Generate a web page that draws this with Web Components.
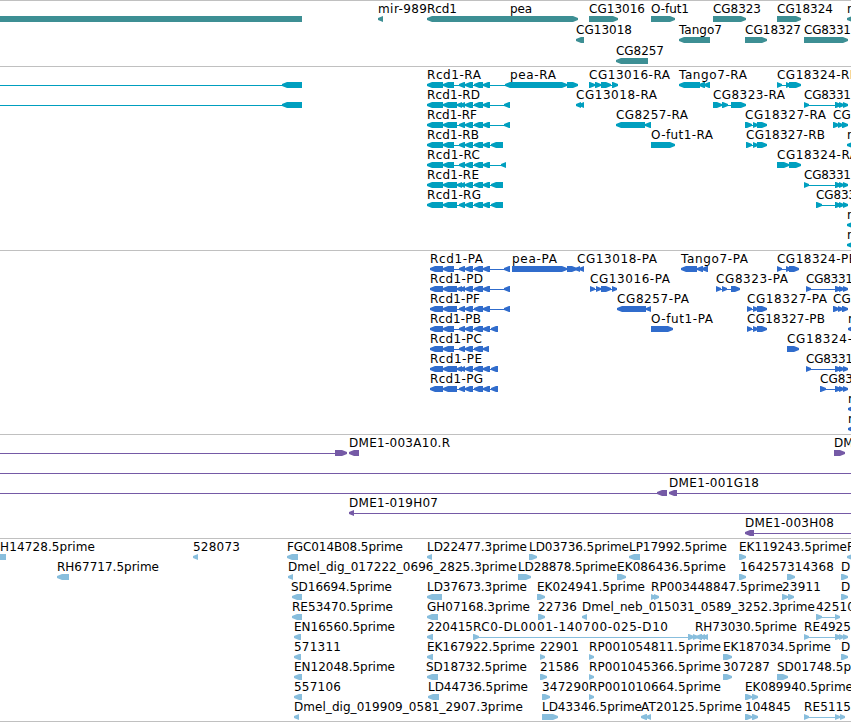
<!DOCTYPE html>
<html lang="en">
<head>
<meta charset="utf-8">
<title>Genome browser</title>
<style>
  html, body { margin: 0; background: #fff; }
  body { width: 851px; height: 722px; overflow: hidden; }
</style>
</head>
<body>
<genome-browser></genome-browser>

<script>
// ============================================================
// <genome-browser>  stack of tracks
// <genome-track>    one bordered track, rows are slotted in
// <track-row>       one lane of labels and features
//
// Row data is "labels | features":
//   label    x:text:width   (width may be left out)
//   feature  a<b  points left     a>b  points right
//            a<>b points both     a=b  plain block    a-b  thin line
// ============================================================

const SVG_NS = "http://www.w3.org/2000/svg";
const HEAD = 5;
const TOP = 13;
const TALL = 6;
const BEARING = 1; // label widths include this much space on the right

const TRACKS = [
  {
    color: "#3d8f94", lane: 21, pad: 0,
    rows: [
      "378:mir-989:50 427:Rcd1:31 510:pea:23 589:CG13016:57 651:O-fut1:39 713:CG8323:49 777:CG18324:57 847:r | 0=302 378<383 427<>578 589>618 651>675 713>746 777>801 847<858",
      "576:CG13018:57 679:Tango7:44 745:CG18327:57 804:CG8331:48 | 576<584 679<710 745>767 804>848",
      "616:CG8257:49 | 616<648",
    ],
  },
  {
    color: "#009fbf", lane: 20, pad: 1,
    rows: [
      "427:Rcd1-RA:55 510:pea-RA:47 589:CG13016-RA:82 679:Tango7-RA:69 777:CG18324-RB:82 | 0-302 282<302 427-506 427<443 443<454 459<465 465<473 474<483 483<490 505<>567 567>578 589-618 589>595 595>601 601>611 612>618 679<700 699<705 704<710 777-801 777>782 786>791 789>801",
      "427:Rcd1-RD:54 576:CG13018-RA:82 713:CG8323-RA:73 804:CG8331:48 | 0-302 282<302 427-510 427<443 443<457 457<462 460<465 465<473 474<483 483<490 504<510 576<581 579<584 713-746 713>722 722>728 731>746 804-848 804>809 835>841 839>844 843>848",
      "427:Rcd1-RF:51 616:CG8257-RA:73 745:CG18327-RA:82 833:CG | 427-510 427<443 443<457 459<465 465<473 474<483 483<490 504<510 616<645 645<651 745-767 745>752 753>758 757>767 833-848 833>839 838>843 842>848",
      "427:Rcd1-RB:53 651:O-fut1-RA:63 746:CG18327-RB:80 847:r | 427-503 427<443 443<454 459<465 465<473 474<483 483<490 491<503 651>675 746-767 746>752 753>758 757>767 847<858",
      "427:Rcd1-RC:54 777:CG18324-RA:82 | 427-506 427<443 443<454 459<465 465<473 474<483 483<490 501<506 777>789 789>801",
      "427:Rcd1-RE:53 804:CG8331:48 | 427-503 427<443 443<457 457<462 460<465 465<473 474<483 483<490 491<503 804-848 804>809 835>841 839>844 843>848",
      "427:Rcd1-RG:55 816:CG833:41 | 427-503 427<443 443<457 459<465 465<473 474<483 483<490 491<503 816-848 816>822 835>841 839>844 843>848",
      "847:r | 847<858",
      "847:r | 847<858",
    ],
  },
  {
    color: "#306ccc", lane: 20, pad: 1,
    rows: [
      "430:Rcd1-PA:54 512:pea-PA:46 577:CG13018-PA:81 681:Tango7-PA:68 777:CG18324-PB:81 | 430-510 430<443 443<454 459<465 465<473 474<483 483<490 504<510 512>567 567>577 575<580 579<584 681<697 697<703 702<708 777-799 777>782 786>791 789>799",
      "430:Rcd1-PD:54 590:CG13016-PA:81 716:CG8323-PA:73 806:CG8331:48 | 430-510 430<443 443<457 457<462 460<465 465<473 474<483 483<490 504<510 590-617 590>595 596>601 601>611 612>617 716-740 716>721 722>727 731>740 806-848 806>811 835>841 839>844 843>848",
      "430:Rcd1-PF:51 617:CG8257-PA:73 747:CG18327-PA:81 833:CG | 430-510 430<443 443<457 459<465 465<473 474<483 483<490 504<510 617<646 646<651 747-767 747>752 753>758 757>767 833-848 833>839 838>843 842>848",
      "430:Rcd1-PB:52 651:O-fut1-PA:63 747:CG18327-PB:79 848:r | 430-498 430<443 443<454 459<465 465<473 474<483 483<490 491<498 651>673 747-767 747>752 753>758 757>767 848<858",
      "430:Rcd1-PC:53 787:CG18324-:66 | 430-489 430<443 443<454 459<465 465<473 474<483 483<489 787>799",
      "430:Rcd1-PE:53 806:CG8331:48 | 430-498 430<443 443<457 457<462 460<465 465<473 474<483 483<490 491<498 806-848 806>811 835>841 839>844 843>848",
      "430:Rcd1-PG:54 820:CG83:34 | 430-498 430<443 443<457 459<465 465<473 474<483 483<490 491<498 820-848 820>826 835>841 839>844 843>848",
      "848:r | 848<858",
      "848:r | 848<858",
    ],
  },
  {
    color: "#755aa6", lane: 20, pad: 1,
    rows: [
      "349:DME1-003A10.R:102 834:DM | 0-336 335>347 349<359 834>845",
      " | 0-851",
      "669:DME1-001G18:91 | 0-660 657<667 669<677 672-851",
      "349:DME1-019H07:90 | 349<354 352-851",
      "745:DME1-003H08:90 | 745<754 750-851",
    ],
  },
  {
    color: "#88bedd", lane: 20, pad: 0, last: true,
    rows: [
      "0:H14728.5prime:96 193:528073:48 287:FGC014B08.5prime:117 427:LD22477.3prime:101 529:LD03736.5prime:101 629:LP17992.5prime:99 739:EK119243.5prime:109 847:F | 0=6 193<198 287<298 427<432 529>537 629<640 739>746 847<858",
      "57:RH67717.5prime:103 288:Dmel_dig_017222_0696_2825.3prime:230 518:LD28878.5prime:100 617:EK086436.5prime:110 740:164257:48 787:314368:48 841:D | 57<69 288<293 518>531 617>626 739>746 787>795 841>848",
      "291:SD16694.5prime:102 427:LD37673.3prime:101 537:EK024941.5prime:109 651:RP003448847.5prime:133 782:23911:40 841:D | 292<302 427<442 537>545 651>656 654>659 782>788 788>794 841>848",
      "292:RE53470.5prime:102 427:GH07168.3prime:104 538:22736:40 582:Dmel_neb_015031_0589_3252.3prime:234 816:42510:40 | 292<302 427<438 538>545 582<587 816-840 816>822 835>840",
      "294:EN16560.5prime:102 427:220415:47 473:RC0-DL0001-140700-025-D10:196 695:RH73030.5prime:103 804:RE4925:48 | 294<301 427<433 473>479 475-700 688>694 693>698 696<702 700<705 703<708 804-848 804>809 835>841 839>844 843>848",
      "294:571311:48 427:EK167922.5prime:109 540:22901:40 589:RP001054811.5prime:133 723:EK187034.5prime:109 841:D | 294<301 427<433 540>545 589>594 723>732 841>848",
      "294:EN12048.5prime:102 426:SD18732.5prime:102 540:21586:40 589:RP001045366.5prime:133 723:307287:48 777:SD01748.5p:75 | 294<302 427<438 540>547 589>594 723>732 777>788",
      "294:557106:48 428:LD44736.5prime:101 542:347290:48 589:RP001010664.5prime:133 745:EK089940.5prime:109 | 294<302 428<439 542>550 589>594 745>752 752>758",
      "294:Dmel_dig_019909_0581_2907.3prime:230 542:LD43346.5prime:101 641:AT20125.5prime:102 745:104845:47 804:RE5115:48 | 294<299 542>558 641<647 646<651 745>752 752>758 804-845 804>809 835>840 840>845",
    ],
  },
];

function svgEl(name, attrs) {
  const el = document.createElementNS(SVG_NS, name);
  for (const key in attrs) el.setAttribute(key, attrs[key]);
  return el;
}

// Outline of one feature block with its arrow heads.
function blockPoints(a, kind, b) {
  const mid = TOP + TALL / 2;
  const end = TOP + TALL;
  const head = Math.min(HEAD, b - a);
  const left = kind[0] === "<" ? head : 0;
  const right = kind.endsWith(">") ? head : 0;
  const pts = [];
  if (left) pts.push([a, mid + 1], [a, mid - 1]);
  pts.push([a + left, TOP], [b - right, TOP]);
  if (right) pts.push([b, mid - 1], [b, mid + 1]);
  pts.push([b - right, end], [a + left, end]);
  return pts.map((p) => p.join(",")).join(" ");
}

class TrackRow extends HTMLElement {
  constructor() {
    super();
    this.attachShadow({ mode: "open" }).innerHTML = `
      <style>
        :host { display: block; height: var(--lane, 20px); }
        svg { display: block; width: 100%; height: 100%; overflow: visible; }
        text { font: 12px "DejaVu Sans", sans-serif; fill: #000; }
        polygon, rect { fill: var(--track-color); }
      </style>
      <svg></svg>
    `;
  }

  set data(value) {
    const svg = this.shadowRoot.querySelector("svg");
    const [labels, features] = value.split("|").map((s) => s.trim());

    for (const f of features.split(" ")) {
      const [, a, kind, b] = f.match(/^(\d+)(<>|[<>=-])(\d+)$/);
      if (kind === "-") {
        svg.appendChild(svgEl("rect", { x: a, y: TOP + 3, width: b - a, height: 1 }));
      } else {
        svg.appendChild(svgEl("polygon", { points: blockPoints(+a, kind, +b) }));
      }
    }

    if (!labels) return;
    for (const l of labels.split(" ")) {
      const [x, name, width] = l.split(":");
      const text = svgEl("text", { x, y: 10 });
      if (width) text.setAttribute("textLength", width - BEARING);
      text.textContent = name;
      svg.appendChild(text);
    }
  }
}

class GenomeTrack extends HTMLElement {
  constructor() {
    super();
    this.attachShadow({ mode: "open" }).innerHTML = `
      <style>
        :host {
          display: flex;
          flex-direction: column;
          border-top: 1px solid #c0c0c0;
          padding: 2px 0 var(--pad, 0);
        }
        :host([last]) { border-bottom: 1px solid #c0c0c0; }
      </style>
      <slot></slot>
    `;
  }
}

class GenomeBrowser extends HTMLElement {
  constructor() {
    super();
    this.attachShadow({ mode: "open" }).innerHTML = `
      <style>
        :host { display: flex; flex-direction: column; width: 851px; height: 722px; overflow: hidden; }
      </style>
    `;
  }

  connectedCallback() {
    for (const t of TRACKS) {
      const track = document.createElement("genome-track");
      track.style.setProperty("--track-color", t.color);
      track.style.setProperty("--lane", t.lane + "px");
      track.style.setProperty("--pad", t.pad + "px");
      track.toggleAttribute("last", !!t.last);
      for (const r of t.rows) {
        const row = document.createElement("track-row");
        row.data = r;
        track.appendChild(row);
      }
      this.shadowRoot.appendChild(track);
    }
  }
}

customElements.define("track-row", TrackRow);
customElements.define("genome-track", GenomeTrack);
customElements.define("genome-browser", GenomeBrowser);
</script>
</body>
</html>
